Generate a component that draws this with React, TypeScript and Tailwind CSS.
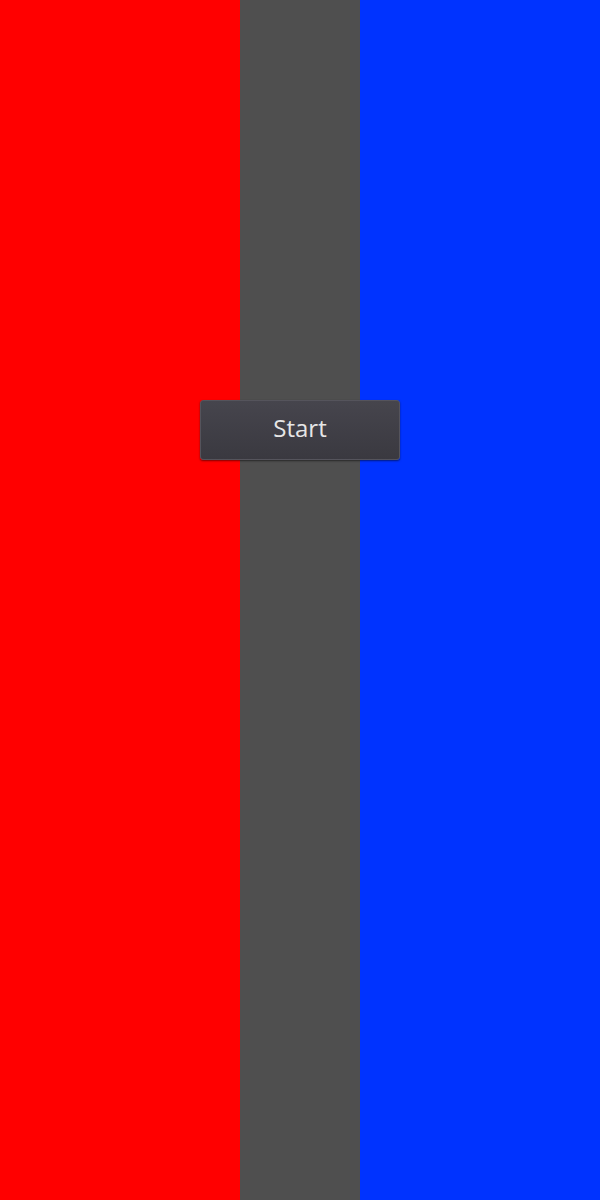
export default function App() {
  return (
    <div className="relative w-[600px] h-[1200px] overflow-hidden" style={{ fontFamily: '"Open Sans", "Noto Sans", sans-serif' }}>
      <div className="flex h-full">
        <div className="w-[240px] bg-[#ff0000]" />
        <div className="w-[120px] bg-[#4f4f4f]" />
        <div className="flex-1 bg-[#0033ff]" />
      </div>
      <button className="absolute left-[200px] top-[400px] w-[200px] h-[60px] pb-[4px] rounded-[3px] border border-[#55545c] bg-gradient-to-b from-[#46454d] to-[#3a3940] text-[#e6e6e6] text-[24px] shadow-[0_1px_2px_rgba(0,0,0,0.5)]">
        Start
      </button>
    </div>
  );
}
